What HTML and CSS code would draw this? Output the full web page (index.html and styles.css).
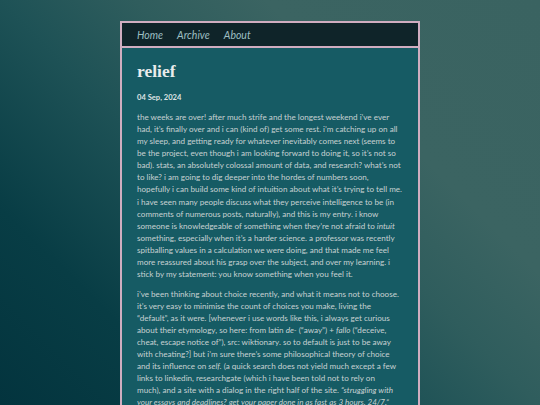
FILE: index.html
```html
<!DOCTYPE html>
<html lang="en">
<head>
<meta charset="utf-8">
<title>relief</title>
<link rel="stylesheet" href="styles.css">
</head>
<body>
<div class="frame">
  <nav class="nav">
    <a href="#">Home</a>
    <a href="#">Archive</a>
    <a href="#">About</a>
  </nav>
  <main class="post">
    <h1 class="title">relief</h1>
    <p class="date">04 Sep, 2024</p>
    <div class="body">
      <p>the weeks are over! after much strife and the longest weekend i’ve ever<br>
had, it’s finally over and i can (kind of) get some rest. i’m catching up on all<br>
my sleep, and getting ready for whatever inevitably comes next (seems to<br>
be the project, even though i am looking forward to doing it, so it’s not so<br>
bad). stats, an absolutely colossal amount of data, and research? what’s not<br>
to like? i am going to dig deeper into the hordes of numbers soon,<br>
hopefully i can build some kind of intuition about what it’s trying to tell me.<br>
i have seen many people discuss what they perceive intelligence to be (in<br>
comments of numerous posts, naturally), and this is my entry. i know<br>
someone is knowledgeable of something when they’re not afraid to <em>intuit</em><br>
something, especially when it’s a harder science. a professor was recently<br>
spitballing values in a calculation we were doing, and that made me feel<br>
more reassured about his grasp over the subject, and over my learning. i<br>
stick by my statement: you know something when you feel it.</p>
      <p>i’ve been thinking about choice recently, and what it means not to choose.<br>
it’s very easy to minimise the count of choices you make, living the<br>
“default”, as it were. [whenever i use words like this, i always get curious<br>
about their etymology, so here: from latin <em>de-</em> (“away”) + <em>fallo</em> (“deceive,<br>
cheat, escape notice of”), src: wiktionary. so to default is just to be away<br>
with cheating?] but i’m sure there’s some philosophical theory of choice<br>
and its influence on <em>self.</em> (a quick search does not yield much except a few<br>
links to linkedin, researchgate (which i have been told not to rely on<br>
much), and a site with a dialog in the right half of the site. <em>“struggling with<br>
your essays and deadlines? get your paper done in as fast as 3 hours. 24/7.”</em><br>
not quite what i was looking for, but it did make me think.)</p>
    </div>
  </main>
</div>
</body>
</html>
```
FILE: styles.css
```css
html, body {
  margin: 0;
  padding: 0;
  height: 100%;
}
body {
  background: linear-gradient(45deg, #03343e 0%, #083d45 21%, #1e5256 43%, #2f5d5d 57%, #3b6462 71%, #3a6361 100%);
  background-attachment: fixed;
  overflow: hidden;
  font-family: "Lato", "Open Sans", sans-serif;
}
.frame {
  width: 296px;
  margin: 21px auto 0;
  border: 2px solid #d0adc0;
  border-bottom: none;
  background: #165b64;
}
.nav {
  display: flex;
  gap: 14px;
  align-items: center;
  height: 23px;
  padding: 0 15px;
  background: #0f2429;
  border-bottom: 2px solid #d0adc0;
}
.nav a {
  font-family: "Lato", sans-serif;
  font-style: italic;
  font-size: 10.5px;
  color: #9dbfc2;
  text-decoration: none;
}
.post {
  padding: 13px 15px 40px 15px;
  color: #c7d1d2;
}
.title {
  margin: 0;
  font-family: "Liberation Serif", serif;
  font-weight: bold;
  font-size: 17.5px;
  line-height: 21px;
  color: #e9ecec;
}
.date {
  margin: 9.5px 0 0;
  font-weight: bold;
  font-size: 7.6px;
  line-height: 10px;
  color: #dde3e3;
}
.body {
  margin-top: 9.7px;
  font-size: 8.1px;
  line-height: 12.05px;
}
.body p {
  margin: 0 0 8.15px;
}
.body em {
  font-style: italic;
}
```
